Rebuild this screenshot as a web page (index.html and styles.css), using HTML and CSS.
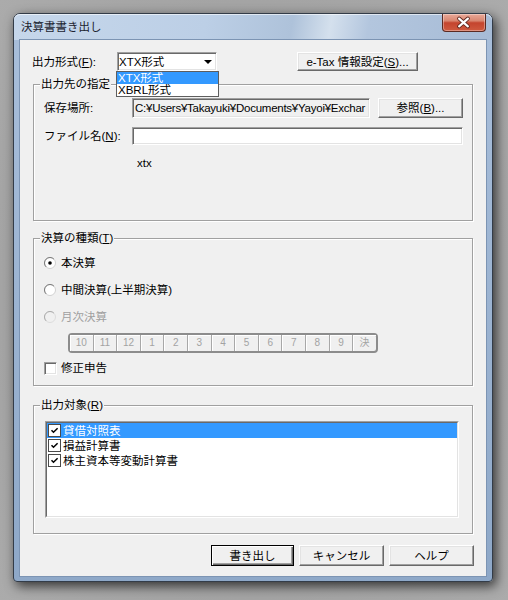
FILE: index.html
```html
<!DOCTYPE html>
<html lang="ja">
<head>
<meta charset="utf-8">
<title>決算書書き出し</title>
<link rel="stylesheet" href="styles.css">
</head>
<body>
<div class="window">
  <div class="titlebar">
    <span class="title">決算書書き出し</span>
    <div class="close">
      <svg width="44" height="18" viewBox="0 0 44 18">
        <path d="M17.5 5.5 L26.5 13.5 M26.5 5.5 L17.5 13.5" stroke="#5a231b" stroke-width="4" stroke-linecap="round"/>
        <path d="M17.5 5.5 L26.5 13.5 M26.5 5.5 L17.5 13.5" stroke="#fff" stroke-width="2.2" stroke-linecap="round"/>
      </svg>
    </div>
  </div>
  <div class="client">
    <div class="row-format">
      <span class="lbl-format">出力形式(<u>F</u>):</span>
      <div class="combo">
        <span class="combo-text">XTX形式</span>
        <span class="combo-arrow"></span>
        <div class="dropdown">
          <div class="dd-item sel">XTX形式</div>
          <div class="dd-item">XBRL形式</div>
        </div>
      </div>
      <div class="btn btn-etax">e-Tax 情報設定(<u>S</u>)...</div>
    </div>

    <div class="group g1">
      <div class="gtitle">出力先の指定</div>
      <div class="frow path-row">
        <span class="flabel">保存場所:</span>
        <div class="field field-ro"><span class="path">C:¥Users¥Takayuki¥Documents¥Yayoi¥Exchar</span></div>
        <div class="btn btn-browse">参照(<u>B</u>)...</div>
      </div>
      <div class="frow name-row">
        <span class="flabel">ファイル名(<u>N</u>):</span>
        <div class="field field-name"></div>
      </div>
      <div class="ext">xtx</div>
    </div>

    <div class="group g2">
      <div class="gtitle">決算の種類(<u>T</u>)</div>
      <div class="opt first">
        <svg class="radio" width="12" height="12" viewBox="0 0 12 12">
          <circle cx="6" cy="6" r="5.5" fill="#fff" stroke="#d0d0d0"/>
          <path d="M2.1 9.9 A5.5 5.5 0 0 1 9.9 2.1" fill="none" stroke="#7a7a7a"/>
          <circle cx="6" cy="6" r="1.8" fill="#000"/>
        </svg>
        <span>本決算</span>
      </div>
      <div class="opt">
        <svg class="radio" width="12" height="12" viewBox="0 0 12 12">
          <circle cx="6" cy="6" r="5.5" fill="#fff" stroke="#d0d0d0"/>
          <path d="M2.1 9.9 A5.5 5.5 0 0 1 9.9 2.1" fill="none" stroke="#7a7a7a"/>
        </svg>
        <span>中間決算(上半期決算)</span>
      </div>
      <div class="opt disabled">
        <svg class="radio" width="12" height="12" viewBox="0 0 12 12">
          <circle cx="6" cy="6" r="5.5" fill="#f0f0f0" stroke="#dcdcdc"/>
          <path d="M2.1 9.9 A5.5 5.5 0 0 1 9.9 2.1" fill="none" stroke="#ababab"/>
        </svg>
        <span>月次決算</span>
      </div>
      <div class="months">
        <span class="m">10</span><span class="m">11</span><span class="m">12</span><span class="m">1</span><span class="m">2</span><span class="m">3</span><span class="m">4</span><span class="m">5</span><span class="m">6</span><span class="m">7</span><span class="m">8</span><span class="m">9</span><span class="m">決</span>
      </div>
      <div class="opt chk-row">
        <span class="cbox sunken"></span>
        <span>修正申告</span>
      </div>
    </div>

    <div class="group g3">
      <div class="gtitle">出力対象(<u>R</u>)</div>
      <div class="listbox">
        <div class="list-inner">
          <div class="litem sel">
            <span class="cbox flat"><svg width="11" height="11" viewBox="0 0 11 11"><path d="M2.5 5.2 L4.5 7.3 L8.6 3.2" fill="none" stroke="#000" stroke-width="1.5"/></svg></span>
            <span>貸借対照表</span>
          </div>
          <div class="litem">
            <span class="cbox flat"><svg width="11" height="11" viewBox="0 0 11 11"><path d="M2.5 5.2 L4.5 7.3 L8.6 3.2" fill="none" stroke="#000" stroke-width="1.5"/></svg></span>
            <span>損益計算書</span>
          </div>
          <div class="litem">
            <span class="cbox flat"><svg width="11" height="11" viewBox="0 0 11 11"><path d="M2.5 5.2 L4.5 7.3 L8.6 3.2" fill="none" stroke="#000" stroke-width="1.5"/></svg></span>
            <span>株主資本等変動計算書</span>
          </div>
        </div>
      </div>
    </div>

    <div class="actions">
      <div class="btn btn-default w83">書き出し</div>
      <div class="btn w85">キャンセル</div>
      <div class="btn w85">ヘルプ</div>
    </div>
  </div>
</div>
</body>
</html>
```
FILE: styles.css
```css
* { box-sizing: border-box; }
html, body { margin: 0; padding: 0; }
body {
  width: 508px;
  height: 600px;
  overflow: hidden;
  background: radial-gradient(ellipse at 50% 50%, #8e8e8e 0%, #a4a4a4 70%, #ababab 100%);
  font: 11.5px/14px "Liberation Sans", "Noto Sans CJK JP", sans-serif;
  color: #000;
}
u { text-decoration: underline; text-underline-offset: 1px; }

.window {
  margin: 13px 0 0 13px;
  width: 480px;
  height: 569px;
  border: 1px solid #333c48;
  border-radius: 7px 7px 4px 4px;
  background: linear-gradient(to bottom, #a9bfdb, #8ea8c8);
  padding: 0 6px 5px;
  display: flex;
  flex-direction: column;
  box-shadow: 3px 4px 12px rgba(0, 0, 0, 0.7);
}

.titlebar {
  height: 26px;
  margin: 0 -6px;
  padding: 0 6px 0 7px;
  display: flex;
  align-items: flex-start;
  border-radius: 6px 6px 0 0;
  background: linear-gradient(100deg, #c6d7eb 0%, #bccfe6 40%, #aec2da 58%, #d4e0ed 66%, #b3c6de 74%, #a6bbd6 100%);
  box-shadow: inset 0 1px 0 rgba(255,255,255,0.6);
}
.title {
  line-height: 26px;
  font-size: 11.5px;
  color: #1b2330;
}
.close {
  margin-left: auto;
  width: 44px;
  height: 18px;
  border: 1px solid #5b2a22;
  border-top: none;
  border-radius: 0 0 4px 4px;
  background: linear-gradient(to bottom, #e9a999 0%, #d98670 40%, #c4442e 52%, #cf5a3f 100%);
  box-shadow: inset 0 0 0 1px rgba(255,255,255,0.35);
  display: flex;
}
.close svg { margin: -1px 0 0 -1px; }

.client {
  flex: 1;
  background: #f0f0f0;
  outline: 1px solid #7c94b3;
  display: flex;
  flex-direction: column;
}

/* top row */
.row-format {
  margin-top: 12px;
  height: 19px;
  padding-left: 12px;
  display: flex;
  align-items: center;
}
.lbl-format { width: 85px; }
.combo {
  position: relative;
  width: 100px;
  height: 19px;
  background: #fff;
  border: 1px solid;
  border-color: #a0a0a0 #fff #fff #a0a0a0;
  box-shadow: inset 1px 1px 0 #696969, inset -1px -1px 0 #e3e3e3;
  display: flex;
  align-items: center;
}
.combo-text { padding-left: 1px; }
.combo-arrow {
  margin-left: auto;
  margin-right: 4px;
  width: 0;
  height: 0;
  border-left: 4px solid transparent;
  border-right: 4px solid transparent;
  border-top: 4px solid #000;
}
.dropdown {
  position: absolute;
  left: -2px;
  top: 18px;
  width: 103px;
  height: 26px;
  border: 1px solid #5e5e5e;
  background: #fff;
  z-index: 5;
}
.dd-item {
  height: 12px;
  line-height: 12px;
  padding-left: 1px;
}
.dd-item.sel { background: #3399ff; color: #fff; }

/* buttons */
.btn {
  display: flex;
  align-items: center;
  justify-content: center;
  background: #f0f0f0;
  border: 1px solid;
  border-color: #fff #696969 #696969 #fff;
  box-shadow: inset -1px -1px 0 #a0a0a0, inset 1px 1px 0 #e3e3e3;
  white-space: nowrap;
}
.btn-etax { margin-left: 80px; width: 121px; height: 19px; }
.btn-browse { margin-left: 8px; width: 85px; height: 20px; }
.btn-default {
  border-color: #000;
  box-shadow: inset 1px 1px 0 #fff, inset -1px -1px 0 #696969, inset -2px -2px 0 #a0a0a0;
}
.w83 { width: 83px; }
.w85 { width: 85px; }

/* groups */
.group {
  margin-left: 13px;
  width: 440px;
  border: 1px solid #a0a0a0;
  box-shadow: 1px 1px 0 #fff, inset 1px 1px 0 #fff;
}
.g1 { margin-top: 13px; height: 137px; }
.g2 { margin-top: 17px; height: 148px; }
.g3 { margin-top: 19px; height: 129px; }
.gtitle {
  margin: -8px 0 0 6px;
  padding: 0 1px;
  width: max-content;
  line-height: 14px;
  background: #f0f0f0;
}

.frow {
  display: flex;
  align-items: center;
  padding-left: 10px;
}
.flabel { width: 88px; }
.path-row { margin-top: 7px; height: 20px; }
.name-row { margin-top: 9px; height: 18px; }
.field {
  height: 100%;
  border: 1px solid;
  border-color: #a0a0a0 #fff #fff #a0a0a0;
  box-shadow: inset 1px 1px 0 #696969, inset -1px -1px 0 #e3e3e3;
  padding: 0 2px;
  line-height: 18px;
  white-space: nowrap;
  overflow: hidden;
}
.path { letter-spacing: -0.25px; }
.field-ro { width: 238px; background: #f0f0f0; }
.field-name { width: 331px; background: #fff; }
.ext { margin-top: 11px; padding-left: 103px; }

/* options */
.opt {
  display: flex;
  align-items: center;
  height: 14px;
  padding-left: 10px;
  margin-top: 13px;
}
.opt.first { margin-top: 11px; }
.radio { margin-right: 5px; flex: none; }
.opt.disabled { color: #a0a0a0; }

.months {
  margin: 9px 0 0 34px;
  width: 310px;
  height: 20px;
  border: 2px solid #8c8c8c;
  border-radius: 4px;
  display: flex;
  background: #f0f0f0;
}
.m {
  flex: 1;
  display: flex;
  align-items: center;
  justify-content: center;
  border-left: 1px solid #a8a8a8;
  box-shadow: inset 1px 1px 0 #fff;
  color: #a3a3a3;
  font-size: 10px;
}
.m:first-child { border-left: none; }

.opt.chk-row { margin-top: 8px; }
.cbox {
  width: 13px;
  height: 13px;
  flex: none;
  background: #fff;
  display: flex;
  align-items: center;
  justify-content: center;
}
.cbox.sunken {
  margin-right: 4px;
  border: 1px solid;
  border-color: #a0a0a0 #fff #fff #a0a0a0;
  box-shadow: inset 1px 1px 0 #696969, inset -1px -1px 0 #e3e3e3;
}
.cbox.flat {
  margin-right: 2px;
  border: 1px solid #4a4a4a;
}

/* list */
.listbox {
  margin: 9px 0 0 11px;
  width: 414px;
  height: 97px;
  border: 1px solid;
  border-color: #a0a0a0 #fff #fff #a0a0a0;
  background: #fff;
}
.list-inner {
  height: 100%;
  border: 1px solid;
  border-color: #696969 #e3e3e3 #e3e3e3 #696969;
}
.litem {
  height: 15px;
  display: flex;
  align-items: center;
  padding-left: 1px;
}
.litem.sel { background: #3399ff; color: #fff; }

.actions {
  margin-top: 11px;
  padding-left: 191px;
  height: 21px;
  display: flex;
  gap: 5px;
}
```
